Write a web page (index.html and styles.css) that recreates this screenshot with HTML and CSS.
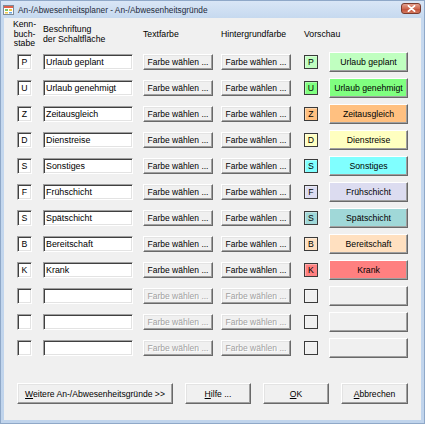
FILE: index.html
```html
<!DOCTYPE html>
<html lang="de">
<head>
<meta charset="utf-8">
<title>An-/Abwesenheitsgründe</title>
<link rel="stylesheet" href="styles.css">
</head>
<body>
<div class="window">
  <div class="titlebar">
    <svg class="appicon" width="11" height="10" viewBox="0 0 11 10">
      <rect x="0.5" y="0.5" width="10" height="9" fill="#fff" stroke="#7d8a99"/>
      <rect x="1" y="1" width="9" height="2" fill="#e0604a"/>
      <rect x="2" y="4" width="3" height="2" fill="#7cc46a"/>
      <rect x="6" y="4" width="3" height="2" fill="#f1c84a"/>
      <rect x="2" y="7" width="3" height="1.5" fill="#f1c84a"/>
      <rect x="6" y="7" width="3" height="1.5" fill="#6aa8e0"/>
    </svg>
    <span class="title">An-/Abwesenheitsplaner - An-/Abwesenheitsgründe</span>
    <div class="close">
      <svg width="9" height="7" viewBox="0 0 9 7">
        <path d="M1.5 0.8 L7.5 6.2 M7.5 0.8 L1.5 6.2" stroke="#fff" stroke-width="1.8" stroke-linecap="round"/>
      </svg>
    </div>
  </div>
  <div class="client">
    <div class="grid">
      <div class="hd hd-key"><span>Kenn-<br>buch-<br>stabe</span></div>
      <div class="hd">Beschriftung<br>der Schaltfläche</div>
      <div class="hd">Textfarbe</div>
      <div class="hd">Hintergrundfarbe</div>
      <div class="hd hd-prev">Vorschau</div>

      <div class="key">P</div><div class="field">Urlaub geplant</div><div class="btn">Farbe wählen ...</div><div class="btn">Farbe wählen ...</div><div class="swatch c-p">P</div><div class="preview c-p">Urlaub geplant</div>
      <div class="key">U</div><div class="field">Urlaub genehmigt</div><div class="btn">Farbe wählen ...</div><div class="btn">Farbe wählen ...</div><div class="swatch c-u">U</div><div class="preview c-u">Urlaub genehmigt</div>
      <div class="key">Z</div><div class="field">Zeitausgleich</div><div class="btn">Farbe wählen ...</div><div class="btn">Farbe wählen ...</div><div class="swatch c-z">Z</div><div class="preview c-z">Zeitausgleich</div>
      <div class="key">D</div><div class="field">Dienstreise</div><div class="btn">Farbe wählen ...</div><div class="btn">Farbe wählen ...</div><div class="swatch c-d">D</div><div class="preview c-d">Dienstreise</div>
      <div class="key">S</div><div class="field">Sonstiges</div><div class="btn">Farbe wählen ...</div><div class="btn">Farbe wählen ...</div><div class="swatch c-s">S</div><div class="preview c-s">Sonstiges</div>
      <div class="key">F</div><div class="field">Frühschicht</div><div class="btn">Farbe wählen ...</div><div class="btn">Farbe wählen ...</div><div class="swatch c-f">F</div><div class="preview c-f">Frühschicht</div>
      <div class="key">S</div><div class="field">Spätschicht</div><div class="btn">Farbe wählen ...</div><div class="btn">Farbe wählen ...</div><div class="swatch c-sp">S</div><div class="preview c-sp">Spätschicht</div>
      <div class="key">B</div><div class="field">Bereitschaft</div><div class="btn">Farbe wählen ...</div><div class="btn">Farbe wählen ...</div><div class="swatch c-b">B</div><div class="preview c-b">Bereitschaft</div>
      <div class="key">K</div><div class="field">Krank</div><div class="btn">Farbe wählen ...</div><div class="btn">Farbe wählen ...</div><div class="swatch c-k">K</div><div class="preview c-k">Krank</div>

      <div class="key"></div><div class="field"></div><div class="btn disabled">Farbe wählen ...</div><div class="btn disabled">Farbe wählen ...</div><div class="swatch"></div><div class="preview"></div>
      <div class="key"></div><div class="field"></div><div class="btn disabled">Farbe wählen ...</div><div class="btn disabled">Farbe wählen ...</div><div class="swatch"></div><div class="preview"></div>
      <div class="key"></div><div class="field"></div><div class="btn disabled">Farbe wählen ...</div><div class="btn disabled">Farbe wählen ...</div><div class="swatch"></div><div class="preview"></div>
    </div>
    <div class="actions">
      <div class="btn big w-more"><span><u>W</u>eitere An-/Abwesenheitsgründe &gt;&gt;</span></div>
      <div class="btn big w-std"><span><u>H</u>ilfe ...</span></div>
      <div class="btn big w-std"><span><u>O</u>K</span></div>
      <div class="btn big w-cancel"><span><u>A</u>bbrechen</span></div>
    </div>
  </div>
</div>
</body>
</html>
```

FILE: styles.css
```css
html, body {
  margin: 0;
  padding: 0;
}

body {
  font-family: "Liberation Sans", Arial, sans-serif;
  font-size: 8.7px;
  color: #000;
  background: #c3d6ee;
}

.window {
  width: 425px;
  height: 424px;
  box-sizing: border-box;
  border: 1px solid #8fa8c8;
  padding: 0 3px 3px 3px;
  background: linear-gradient(#d9e6f6, #c6d9ef 17px, #c0d4ec);
  display: flex;
  flex-direction: column;
}

.titlebar {
  height: 17px;
  margin: 0 -3px;
  padding-left: 2px;
  display: flex;
  align-items: center;
}

.appicon {
  display: block;
  flex: none;
}

.title {
  margin-left: 4px;
  font-size: 8.3px;
  color: #1e2a3a;
  white-space: nowrap;
}

.close {
  margin-left: auto;
  margin-right: 3px;
  width: 20px;
  height: 11px;
  box-sizing: border-box;
  border: 1px solid #7b3b2e;
  border-radius: 3px;
  background: linear-gradient(#e4a08e, #cf6a52 50%, #c2503a 55%, #d2785e);
  display: flex;
  align-items: center;
  justify-content: center;
  margin-top: -2px;
}

.close svg {
  display: block;
}

.client {
  flex: 1;
  background: #f0f0f0;
}

.grid {
  display: grid;
  grid-template-columns: 26px 100px 78px 83px 25px 79px;
  grid-template-rows: 31px repeat(12, 26px);
  padding-left: 13px;
  align-items: center;
  justify-items: start;
}

.hd {
  margin-top: 2px;
  line-height: 9.4px;
  white-space: nowrap;
}

.hd-key {
  width: 15px;
  display: flex;
  justify-content: center;
  text-align: center;
}

.hd-prev {
  grid-column: span 2;
}

/* sunken entry fields */
.key,
.field {
  box-sizing: border-box;
  height: 16px;
  background: #fff;
  border: 1px solid;
  border-color: #a0a0a0 #ffffff #ffffff #a0a0a0;
  box-shadow: inset 1px 1px 0 #404040, inset -1px -1px 0 #e3e3e3;
  display: flex;
  align-items: center;
  white-space: nowrap;
  overflow: hidden;
}

.key {
  width: 15px;
  justify-content: center;
  margin-top: -1px;
}

.field {
  width: 90px;
  padding-left: 2px;
  margin-top: -1px;
  font-size: 8.9px;
}

/* raised buttons */
.btn {
  box-sizing: border-box;
  width: 70px;
  height: 16px;
  background: #f0f0f0;
  border: 1px solid;
  border-color: #ffffff #696969 #696969 #ffffff;
  box-shadow: inset -1px -1px 0 #a0a0a0, inset 1px 1px 0 #e3e3e3;
  display: flex;
  align-items: center;
  justify-content: center;
  white-space: nowrap;
  font-size: 8.5px;
}

.btn.disabled {
  color: #a0a0a0;
  text-shadow: 1px 1px 0 #ffffff;
}

.swatch {
  box-sizing: border-box;
  width: 14px;
  height: 14px;
  background: #f0f0f0;
  border: 1px solid #3a3a3a;
  box-shadow: inset 1px 1px 0 rgba(255, 255, 255, 0.35);
  display: flex;
  align-items: center;
  justify-content: center;
  font-size: 8.7px;
}

.preview {
  box-sizing: border-box;
  width: 79px;
  height: 20px;
  background: #f0f0f0;
  border: 1px solid;
  border-color: #ffffff #696969 #696969 #ffffff;
  box-shadow: inset -1px -1px 0 #a0a0a0;
  display: flex;
  align-items: center;
  justify-content: center;
  white-space: nowrap;
  font-size: 8.7px;
  margin-top: -1px;
}

.c-p { background: #c0ffc0; }
.c-u { background: #80ff80; }
.c-z { background: #ffc080; }
.c-d { background: #ffffc0; }
.c-s { background: #80ffff; }
.c-f { background: #dcdcf0; }
.c-sp { background: #a0d8d8; }
.c-b { background: #ffe0c0; }
.c-k { background: #ff8080; }

.actions {
  display: flex;
  gap: 12px;
  padding-left: 13px;
  margin-top: 22px;
}

.btn.big {
  height: 21px;
  font-size: 8.6px;
}

.w-more { width: 156px; }
.w-std { width: 66px; }
.w-cancel { width: 67px; }

u {
  text-decoration-thickness: 1px;
  text-underline-offset: 1px;
}
```
